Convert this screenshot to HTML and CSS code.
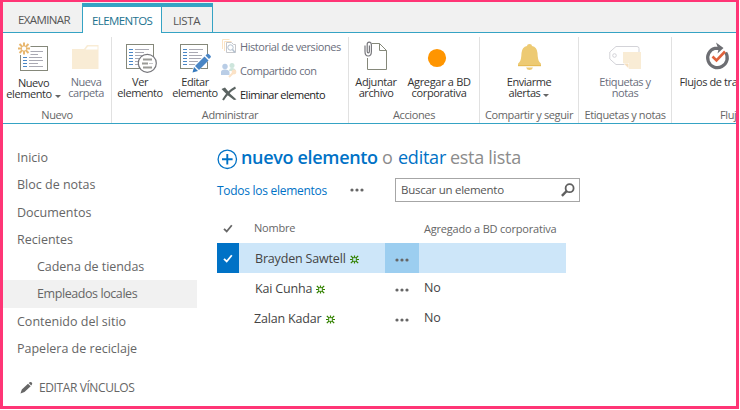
FILE: index.html
```
<!DOCTYPE html>
<html lang="es">
<head>
<meta charset="utf-8">
<title>Lista</title>
<link rel="stylesheet" href="styles.css">
</head>
<body>
<svg width="0" height="0" class="defs">
  <symbol id="page" viewBox="0 0 28 25">
    <rect x=".5" y=".5" width="27" height="24" fill="#fff" stroke="#85887a"/>
    <path d="M3 5.500h4M3 8.500h4M3 11.500h4M3 14.500h4M3 17.500h4M3 20.500h4" stroke="#4a86c5"/>
    <path d="M9 5.500h14M9 8.500h9M9 11.500h13M9 14.500h14M9 17.500h9M9 20.500h14" stroke="#a9a9b3"/>
  </symbol>
  <symbol id="new" viewBox="0 0 9 9">
    <path d="M.8.800l2.200 2.200M8.200.800L6 3M.8 8.200L3 6M8.200 8.200L6 6M4.500 .5v2M4.500 8.500v-2M0 4.500h2.500M9 4.500H6.500" stroke="#338200" stroke-width="1.200" fill="none"/>
    <rect x="2.700" y="2.700" width="3.600" height="3.600" fill="none" stroke="#338200" stroke-width=".9"/>
  </symbol>
  <symbol id="dots" viewBox="0 0 14 4">
    <circle cx="2" cy="2" r="1.600"/><circle cx="7" cy="2" r="1.600"/><circle cx="12" cy="2" r="1.600"/>
  </symbol>
  <symbol id="check" viewBox="0 0 10 9">
    <path d="M1 4.800l2.700 2.700L8.800 1.200" fill="none" stroke="currentColor" stroke-width="1.800"/>
  </symbol>
</svg>
<div class="frame">
  <nav class="tabs">
    <div class="tab examinar">EXAMINAR</div>
    <div class="tab context active">ELEMENTOS</div>
    <div class="tab context lista">LISTA</div>
    <div class="tabs-rest"></div>
  </nav>

  <section class="ribbon">
    <div class="group g1">
      <div class="items">
        <div class="item nuevo">
          <svg class="icon" width="32" height="32" viewBox="0 0 32 32">
            <use href="#page" x="3" y="5" width="28" height="25"/>
            <path d="M1 1h12.500v13H1z" fill="#fff"/>
            <path d="M7 1.500v4M7 9.500v4M1 7.500h4M9 7.500h4M2.500 3l3 3M8.500 9l3 3M11.500 3l-3 3M5.500 9l-3 3" stroke="#e8b76f" stroke-width="2"/>
          </svg>
          <span class="cap">Nuevo</span><span class="cap">elemento <i class="arrow"></i></span>
        </div>
        <div class="item carpeta off">
          <svg class="icon" width="32" height="32" viewBox="0 0 32 32">
            <path d="M2 8h12l3-4h11.500v24H2z" fill="#f9ecd5"/><path d="M18 5.500h9.500v3H15.500z" fill="#fff"/>
          </svg>
          <span class="cap">Nueva</span><span class="cap">carpeta</span>
        </div>
      </div>
      <div class="label">Nuevo</div>
    </div>
    <div class="group g2">
      <div class="items">
        <div class="item ver">
          <svg class="icon" width="32" height="32" viewBox="0 0 32 32">
            <use href="#page" x="1" y="3" width="28" height="25"/>
            <circle cx="22.300" cy="22.300" r="9" fill="#fff" stroke="#77777c" stroke-width="1.200"/>
            <path d="M18 18.500h9M17 22.500h6M18 26.500h9" stroke="#9a9a96" stroke-width="1.800"/>
            <path d="M24 22.500h4" stroke="#c8c8cc"/>
          </svg>
          <span class="cap">Ver</span><span class="cap">elemento</span>
        </div>
        <div class="item editar">
          <svg class="icon" width="32" height="32" viewBox="0 0 32 32">
            <use href="#page" x="1" y="3" width="28" height="25"/>
            <path d="M12.500 32l2-7L27 12.500l5 4.500L19 30z" fill="#fff"/>
            <path d="M13.500 31.500l1.500-5.500 4 4z" fill="#3579bd"/><path d="M16 25l9.500-9.500 4 4L20 29z" fill="#4a86c5"/>
            <path d="M26.500 14.500l1.500-1.500q1-.7 2 .2l1.500 1.500q.8 1 0 1.800L30 18z" fill="#4a86c5"/>
          </svg>
          <span class="cap">Editar</span><span class="cap">elemento</span>
        </div>
        <div class="stack">
          <div class="row off hist">
            <svg width="16" height="16" viewBox="0 0 16 16" fill="none">
              <path d="M1.500 11V1.500h7" stroke="#fae3c5"/><path d="M3.500 13V3.500h7" stroke="#fae3c5"/>
              <path d="M12.500 6.500l-2-2h-5v10h9V6.500z" stroke="#c5c6ca"/>
              <circle cx="9.500" cy="9.500" r="2.700" stroke="#b3c1d0" fill="#fff"/><path d="M11.500 11.500l2.500 3" stroke="#b3c1d0" stroke-width="1.500"/>
            </svg><span>Historial de versiones</span>
          </div>
          <div class="row off comp">
            <svg width="16" height="16" viewBox="0 0 16 16">
              <circle cx="11" cy="3.500" r="2.500" fill="#cde5dc"/><path d="M8 9q0-3 3-3t4 3z" fill="#cde5dc"/>
              <circle cx="4" cy="4.500" r="2.700" fill="#b9cde6"/><path d="M0 13V10q0-2.500 4-2.500T8.500 10v3z" fill="#b9cde6"/>
              <circle cx="13" cy="10" r="2.400" fill="#fbe2c6"/><path d="M12 11l-4 4" stroke="#fbe2c6" stroke-width="2"/>
            </svg><span>Compartido con</span>
          </div>
          <div class="row elim">
            <svg width="16" height="16" viewBox="0 0 16 16">
              <path d="M.5 3L4 1.500Q9 8.500 15.500 13.500L13 14Q6 9.500.5 3z" fill="#5b6462"/>
              <path d="M14.500 1.500Q7 5.500 2 14" stroke="#5b6462" stroke-width="2" fill="none"/>
            </svg><span>Eliminar elemento</span>
          </div>
        </div>
      </div>
      <div class="label">Administrar</div>
    </div>
    <div class="group g3">
      <div class="items">
        <div class="item adjuntar">
          <svg class="icon" width="32" height="32" viewBox="0 0 32 32" fill="none">
            <path d="M7.500 2.500h12l7 7v19h-19z" stroke="#85887a" fill="#fff"/><path d="M19.500 2.500v7h7" stroke="#85887a"/>
            <rect x="4" y="0" width="8" height="17" fill="#fff"/>
            <path d="M5 4.500v6q0 4.500 3.200 4.500t3.200-4.500V4q0-2.800-2.200-2.800T7.200 4v6.200q0 1.600 1.100 1.600t1.100-1.600V4.500" stroke="#77777c" stroke-width="1.200"/>
          </svg>
          <span class="cap">Adjuntar</span><span class="cap">archivo</span>
        </div>
        <div class="item agregar">
          <svg class="icon" width="32" height="32" viewBox="0 0 32 32"><circle cx="14" cy="17" r="9.100" fill="#ff9500"/></svg>
          <span class="cap">Agregar a BD</span><span class="cap">corporativa</span>
        </div>
      </div>
      <div class="label">Acciones</div>
    </div>
    <div class="group g4">
      <div class="items">
        <div class="item enviarme">
          <svg class="icon" width="32" height="32" viewBox="0 0 32 32">
            <path d="M14 5q0-2 2.500-2T19 5q5 1 5.500 7 .2 7 2 9 2 1.500 1.500 3H5q-.5-1.500 1.500-3 1.800-2 2-9 .5-6 5.500-7z" fill="#edca73"/>
            <path d="M5 24h23v1.200H5z" fill="#e6bb55"/><path d="M13 26.500h7q-1 2.500-3.500 2.500T13 26.500z" fill="#edca73"/>
          </svg>
          <span class="cap">Enviarme</span><span class="cap">alertas <i class="arrow"></i></span>
        </div>
      </div>
      <div class="label">Compartir y seguir</div>
    </div>
    <div class="group g5">
      <div class="items">
        <div class="item etiquetas off">
          <svg class="icon" width="32" height="32" viewBox="0 0 32 32">
            <path d="M7 5.500h21q2 0 2 2v14q0 2-2 2H7L.8 18v-7z" fill="#fff" stroke="#d3d3d8"/>
            <circle cx="5.500" cy="14.500" r="1.800" fill="#fff" stroke="#d3d3d8"/>
            <path d="M14 11h18v17H20l-6-6z" fill="#f9ecd5"/><path d="M14 22h6v6z" fill="#fff"/><path d="M15 22.500h4.500V27z" fill="#f6dfbd"/>
          </svg>
          <span class="cap">Etiquetas y</span><span class="cap">notas</span>
        </div>
      </div>
      <div class="label">Etiquetas y notas</div>
    </div>
    <div class="group g6">
      <div class="items">
        <div class="item flujos">
          <svg class="icon" width="32" height="32" viewBox="0 0 32 32" fill="none">
            <path d="M24.700 11.500A9.800 9.800 0 1 1 14 7.300H20" stroke="#6d6e73" stroke-width="3.200"/>
            <path d="M15 1.500l7.500 5.500-6 5.500 1-4z" fill="#6d6e73"/>
            <path d="M11.500 15.500l4 4 8.500-9" stroke="#e0623c" stroke-width="2.600"/>
          </svg>
          <span class="cap">Flujos de tra</span>
        </div>
      </div>
      <div class="label">Fluj</div>
    </div>
  </section>

  <div class="content">
    <aside class="side">
      <a>Inicio</a>
      <a>Bloc de notas</a>
      <a>Documentos</a>
      <a>Recientes</a>
      <a class="sub">Cadena de tiendas</a>
      <a class="sub current">Empleados locales</a>
      <a>Contenido del sitio</a>
      <a>Papelera de reciclaje</a>
      <div class="edit">
        <svg width="13" height="13" viewBox="0 0 13 13" fill="#666"><path d="M.5 12.500l1.300-4L8 2.800l2.700 2.500L4.500 11zM8.700 2.100l1-.9q1-.6 1.800.1l.5.600q.6.900-.1 1.700l-.7.900z"/></svg>
        <span>EDITAR VÍNCULOS</span>
      </div>
    </aside>
    <main class="main">
      <h1 class="hero">
        <svg width="21" height="21" viewBox="0 0 21 21" fill="none" stroke="#0072c6"><circle cx="10.300" cy="10.300" r="9.200" stroke-width="1.300"/><path d="M5 10.300h10.600M10.300 5v10.600" stroke-width="1.900"/></svg>
        <b>nuevo elemento</b><span class="o">o</span><span class="ed">editar</span><span class="rest">esta lista</span>
      </h1>
      <div class="views">
        <span class="view">Todos los elementos</span>
        <svg class="dots" width="14" height="4"><use href="#dots"/></svg>
        <div class="search"><span>Buscar un elemento</span>
          <svg width="14" height="14" viewBox="0 0 14 14" fill="none" stroke="#606060"><circle cx="8.600" cy="5.200" r="4" stroke-width="1.800"/><path d="M5.600 8.200L.9 12.900" stroke-width="2.400"/></svg>
        </div>
      </div>
      <div class="grid">
        <div class="line head">
          <div class="c1"><svg width="10" height="9"><use href="#check"/></svg></div><div class="c2">Nombre</div><div class="c3"></div><div class="c4">Agregado a BD corporativa</div>
        </div>
        <div class="line selected">
          <div class="c1"><svg width="10" height="9"><use href="#check"/></svg></div><div class="c2">Brayden Sawtell<svg class="new" width="9" height="9"><use href="#new"/></svg></div><div class="c3"><svg class="dots" width="14" height="4"><use href="#dots"/></svg></div><div class="c4"></div>
        </div>
        <div class="line">
          <div class="c1"></div><div class="c2">Kai Cunha<svg class="new" width="9" height="9"><use href="#new"/></svg></div><div class="c3"><svg class="dots" width="14" height="4"><use href="#dots"/></svg></div><div class="c4">No</div>
        </div>
        <div class="line">
          <div class="c1"></div><div class="c2 zk">Zalan Kadar<svg class="new" width="9" height="9"><use href="#new"/></svg></div><div class="c3"><svg class="dots" width="14" height="4"><use href="#dots"/></svg></div><div class="c4">No</div>
        </div>
      </div>
    </main>
  </div>
</div>
</body>
</html>
```
FILE: styles.css
```
* { box-sizing: border-box; }
body { margin: 0; background: #fff; font-family: "Open Sans", "Noto Sans", sans-serif; color: #444; overflow: hidden; }
.defs { display: block; height: 0; }
svg { display: block; flex: none; }
.frame { width: 739px; height: 409px; border: 3px solid #ff3576; border-top-width: 2px; overflow: hidden; background: #fff; }

.tabs { display: flex; height: 31px; background: #f1f1f1; font-size: 11.5px; letter-spacing: -.62px; line-height: 35px; white-space: nowrap; color: #555; }
.tab { border-bottom: 1px solid #35a3c4; }
.examinar { width: 79px; padding-left: 15px; }
.context { border-top: 4px solid #35a3c4; border-right: 1px solid #35a3c4; line-height: 27px; margin-top: 1px; }
.active { width: 80px; padding-left: 9px; background: #fff; border-left: 1px solid #35a3c4; border-bottom: 0; color: #1c7390; }
.lista { width: 51px; padding-left: 11px; letter-spacing: -.43px; }
.tabs-rest { flex: 1; border-bottom: 1px solid #35a3c4; }

.ribbon { display: flex; height: 91px; padding-top: 4px; border-bottom: 1px solid #35a3c4; font-size: 11px; line-height: 11px; letter-spacing: -.44px; color: #333; overflow: hidden; }
.group { flex: none; border-right: 1px solid #e1e1e1; display: flex; flex-direction: column; height: 86px; }
.g1 { width: 109px; } .g2 { width: 237px; } .g3 { width: 131px; } .g4 { width: 99px; } .g5 { width: 93px; } .g6 { width: 120px; border: 0; }
.items { display: flex; height: 72px; padding-top: 4px; }
.item { display: flex; flex-direction: column; align-items: center; white-space: nowrap; }
.icon { margin-bottom: 3px; }
.cap { display: flex; align-items: center; }
.arrow { border: 3px solid transparent; border-top-color: #666; border-bottom: 0; margin: 6px 0 0 3px; }
.nuevo { width: 61px; padding-top: 1px; }
.nuevo .icon { margin-top: -1px; margin-bottom: 4px; position: relative; left: -1px; }
.carpeta { width: 46px; margin-left: -1px; }
.ver { width: 56px; } .editar { width: 54px; }
.ver .icon { position: relative; left: 1px; }
.off { color: #6a6e7c; }
.adjuntar { width: 54px; letter-spacing: -.4px; } .agregar { width: 72px; letter-spacing: -.33px; }
.enviarme { width: 98px; } .etiquetas { width: 94px; }
.flujos { padding-left: 7px; width: 66px; letter-spacing: -.4px; }
.flujos .icon { position: relative; left: 8px; }
.label { text-align: center; color: #666; letter-spacing: -.38px; line-height: 12px; white-space: nowrap; }
.g6 .label { text-align: left; padding-left: 48px; }
.stack { display: flex; flex-direction: column; gap: 8px; margin: -3px 0 0 -1px; }
.row { display: flex; gap: 3px; align-items: center; height: 16px; white-space: nowrap; }
.elim { color: #222; letter-spacing: -.5px; }

.content { display: flex; }
.side { width: 194px; padding-top: 20px; font-size: 12.5px; color: #666; }
.side a { display: block; height: 27.3px; line-height: 27.3px; padding-left: 14px; white-space: nowrap; }
.side .sub { padding-left: 34px; letter-spacing: -.05px; }
.side .current { background: #f1f1f1; letter-spacing: -.42px; }
.edit { display: flex; align-items: center; gap: 6px; margin-top: 17px; padding-left: 17px; font-size: 12px; letter-spacing: -.4px; line-height: 18px; white-space: nowrap; }
.edit svg { margin-top: -2px; }

.main { padding-left: 20px; width: 400px; }
.hero { display: flex; align-items: center; margin: 21px 0 0; height: 26px; font-size: 18px; font-weight: 400; color: #8c8c8c; white-space: nowrap; line-height: 24px; padding-bottom: 2px; }
.hero svg { margin-right: 3px; margin-top: 4px; }
.hero b { font-weight: 600; letter-spacing: -.33px; color: #0072c6; width: 141px; }
.hero .o { width: 16px; }
.hero .ed { color: #0072c6; letter-spacing: -.24px; width: 52px; }
.hero .rest { letter-spacing: -.3px; }
.views { display: flex; align-items: center; margin-top: 7px; height: 24px; white-space: nowrap; }
.view { width: 133px; font-size: 12px; letter-spacing: -.28px; color: #0072c6; }
.dots { fill: #666; }
.search { margin-left: 31px; width: 185px; height: 24px; border: 1px solid #a6a6a6; display: flex; align-items: center; justify-content: space-between; padding: 0 4px 0 5px; font-size: 11.5px; letter-spacing: -.27px; color: #555; }
.search span { padding-bottom: 2px; }
.grid { margin-top: 11px; width: 349px; font-size: 12.5px; letter-spacing: -.17px; }
.line { display: flex; height: 30px; line-height: 30px; white-space: nowrap; }
.c1 { width: 22px; display: flex; align-items: center; justify-content: center; }
.c2 { width: 146px; padding: 2px 0 0 16px; display: flex; align-items: center; }
.zk { padding-left: 15px; }
.c3 { width: 34px; display: flex; align-items: center; justify-content: center; padding-top: 3px; }
.c4 { width: 147px; padding-left: 5px; line-height: 29px; }
.new { margin: 1px 0 0 4px; }
.head { font-size: 11px; color: #666; letter-spacing: -.2px; line-height: 32px; }
.head .c2 { padding: 0 0 0 15px; }
.head .c4 { line-height: 31px; }
.selected { background: #cde6f9; }
.selected .c1 { background: #0072c6; color: #fff; }
.selected .c3 { background: #9ccef0; }
```
